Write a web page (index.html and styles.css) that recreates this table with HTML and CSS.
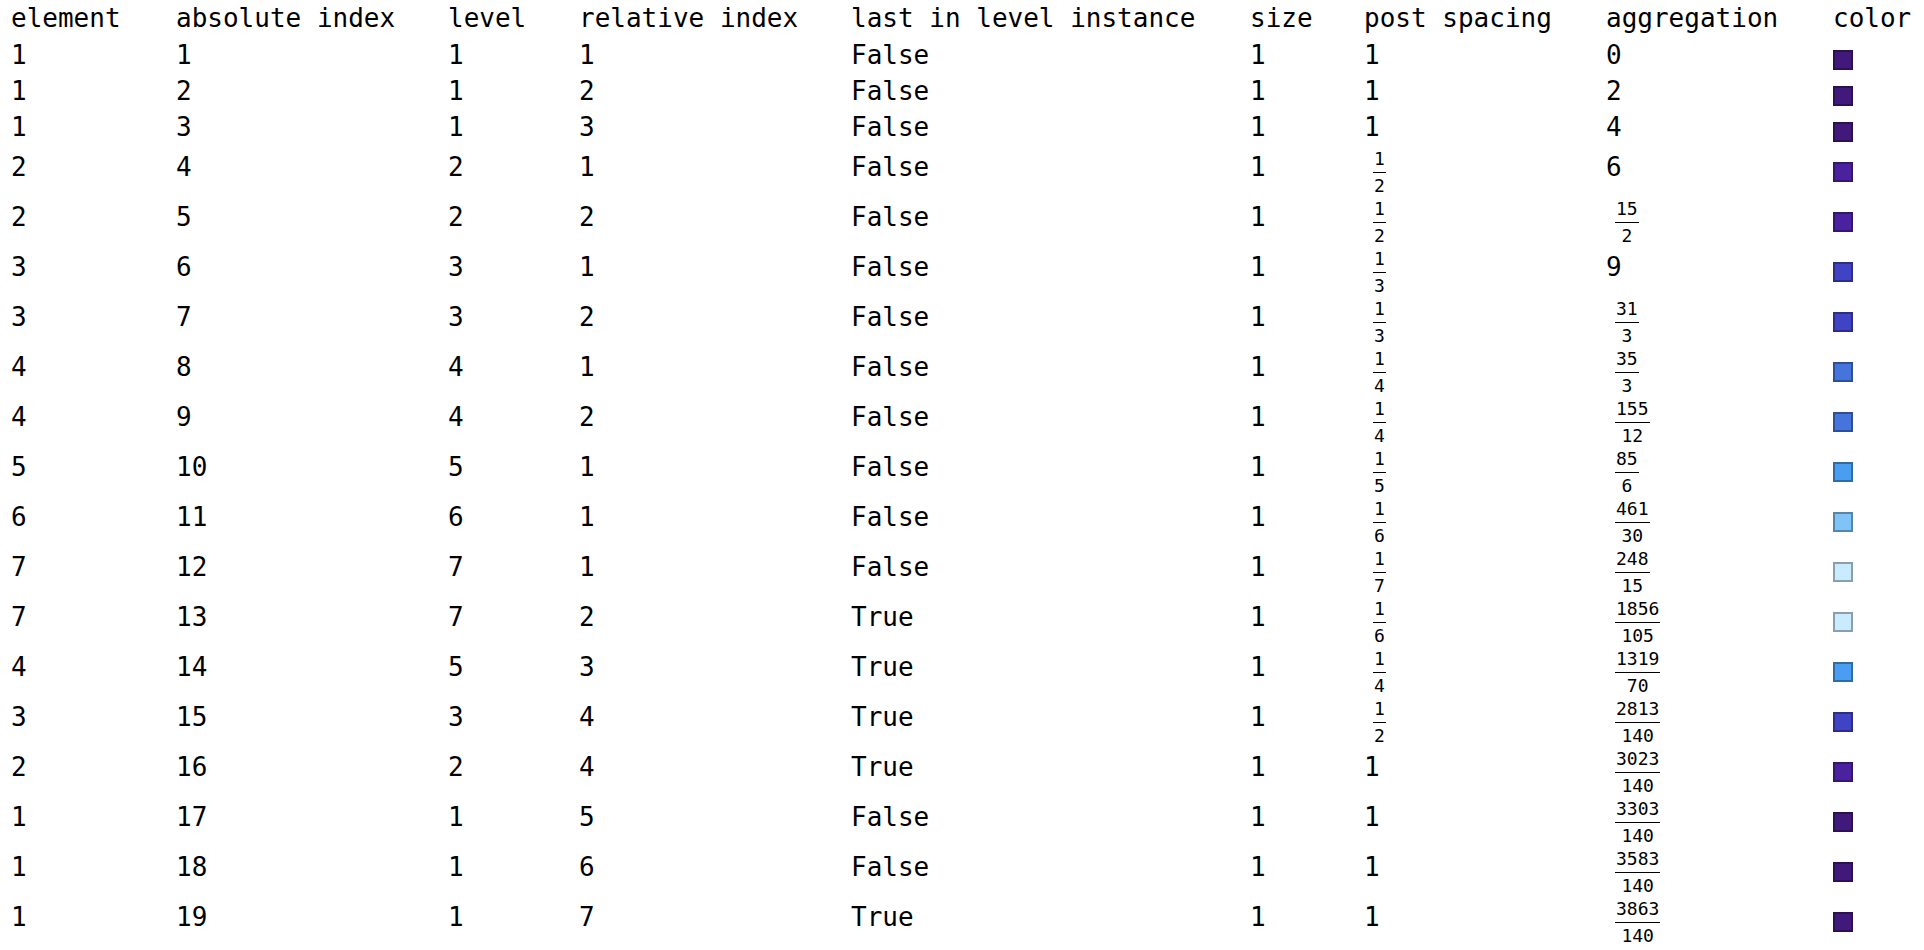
FILE: index.html
```html
<!DOCTYPE html>
<html>
<head>
<meta charset="utf-8">
<title>Levels</title>
<link rel="stylesheet" href="styles.css">
</head>
<body>
<table class="grid">
<colgroup>
<col class="c1"><col class="c2"><col class="c3"><col class="c4"><col class="c5"><col class="c6"><col class="c7"><col class="c8"><col class="c9">
</colgroup>
<thead>
<tr><th>element</th><th>absolute index</th><th>level</th><th>relative index</th><th>last in level instance</th><th>size</th><th>post spacing</th><th>aggregation</th><th>color</th></tr>
</thead>
<tbody>
<tr><td>1</td><td>1</td><td>1</td><td>1</td><td>False</td><td>1</td><td>1</td><td>0</td><td><span class="swatch lv1"></span></td></tr>
<tr><td>1</td><td>2</td><td>1</td><td>2</td><td>False</td><td>1</td><td>1</td><td>2</td><td><span class="swatch lv1"></span></td></tr>
<tr><td>1</td><td>3</td><td>1</td><td>3</td><td>False</td><td>1</td><td>1</td><td>4</td><td><span class="swatch lv1"></span></td></tr>
<tr><td>2</td><td>4</td><td>2</td><td>1</td><td>False</td><td>1</td><td><span class="frac"><span class="num">1</span><span class="bar"></span><span class="den">2</span></span></td><td>6</td><td><span class="swatch lv2"></span></td></tr>
<tr><td>2</td><td>5</td><td>2</td><td>2</td><td>False</td><td>1</td><td><span class="frac"><span class="num">1</span><span class="bar"></span><span class="den">2</span></span></td><td><span class="frac"><span class="num">15</span><span class="bar"></span><span class="den">2</span></span></td><td><span class="swatch lv2"></span></td></tr>
<tr><td>3</td><td>6</td><td>3</td><td>1</td><td>False</td><td>1</td><td><span class="frac"><span class="num">1</span><span class="bar"></span><span class="den">3</span></span></td><td>9</td><td><span class="swatch lv3"></span></td></tr>
<tr><td>3</td><td>7</td><td>3</td><td>2</td><td>False</td><td>1</td><td><span class="frac"><span class="num">1</span><span class="bar"></span><span class="den">3</span></span></td><td><span class="frac"><span class="num">31</span><span class="bar"></span><span class="den">3</span></span></td><td><span class="swatch lv3"></span></td></tr>
<tr><td>4</td><td>8</td><td>4</td><td>1</td><td>False</td><td>1</td><td><span class="frac"><span class="num">1</span><span class="bar"></span><span class="den">4</span></span></td><td><span class="frac"><span class="num">35</span><span class="bar"></span><span class="den">3</span></span></td><td><span class="swatch lv4"></span></td></tr>
<tr><td>4</td><td>9</td><td>4</td><td>2</td><td>False</td><td>1</td><td><span class="frac"><span class="num">1</span><span class="bar"></span><span class="den">4</span></span></td><td><span class="frac"><span class="num">155</span><span class="bar"></span><span class="den">12</span></span></td><td><span class="swatch lv4"></span></td></tr>
<tr><td>5</td><td>10</td><td>5</td><td>1</td><td>False</td><td>1</td><td><span class="frac"><span class="num">1</span><span class="bar"></span><span class="den">5</span></span></td><td><span class="frac"><span class="num">85</span><span class="bar"></span><span class="den">6</span></span></td><td><span class="swatch lv5"></span></td></tr>
<tr><td>6</td><td>11</td><td>6</td><td>1</td><td>False</td><td>1</td><td><span class="frac"><span class="num">1</span><span class="bar"></span><span class="den">6</span></span></td><td><span class="frac"><span class="num">461</span><span class="bar"></span><span class="den">30</span></span></td><td><span class="swatch lv6"></span></td></tr>
<tr><td>7</td><td>12</td><td>7</td><td>1</td><td>False</td><td>1</td><td><span class="frac"><span class="num">1</span><span class="bar"></span><span class="den">7</span></span></td><td><span class="frac"><span class="num">248</span><span class="bar"></span><span class="den">15</span></span></td><td><span class="swatch lv7"></span></td></tr>
<tr><td>7</td><td>13</td><td>7</td><td>2</td><td>True</td><td>1</td><td><span class="frac"><span class="num">1</span><span class="bar"></span><span class="den">6</span></span></td><td><span class="frac"><span class="num">1856</span><span class="bar"></span><span class="den">105</span></span></td><td><span class="swatch lv7"></span></td></tr>
<tr><td>4</td><td>14</td><td>5</td><td>3</td><td>True</td><td>1</td><td><span class="frac"><span class="num">1</span><span class="bar"></span><span class="den">4</span></span></td><td><span class="frac"><span class="num">1319</span><span class="bar"></span><span class="den">70</span></span></td><td><span class="swatch lv5"></span></td></tr>
<tr><td>3</td><td>15</td><td>3</td><td>4</td><td>True</td><td>1</td><td><span class="frac"><span class="num">1</span><span class="bar"></span><span class="den">2</span></span></td><td><span class="frac"><span class="num">2813</span><span class="bar"></span><span class="den">140</span></span></td><td><span class="swatch lv3"></span></td></tr>
<tr><td>2</td><td>16</td><td>2</td><td>4</td><td>True</td><td>1</td><td>1</td><td><span class="frac"><span class="num">3023</span><span class="bar"></span><span class="den">140</span></span></td><td><span class="swatch lv2"></span></td></tr>
<tr><td>1</td><td>17</td><td>1</td><td>5</td><td>False</td><td>1</td><td>1</td><td><span class="frac"><span class="num">3303</span><span class="bar"></span><span class="den">140</span></span></td><td><span class="swatch lv1"></span></td></tr>
<tr><td>1</td><td>18</td><td>1</td><td>6</td><td>False</td><td>1</td><td>1</td><td><span class="frac"><span class="num">3583</span><span class="bar"></span><span class="den">140</span></span></td><td><span class="swatch lv1"></span></td></tr>
<tr><td>1</td><td>19</td><td>1</td><td>7</td><td>True</td><td>1</td><td>1</td><td><span class="frac"><span class="num">3863</span><span class="bar"></span><span class="den">140</span></span></td><td><span class="swatch lv1"></span></td></tr>
</tbody>
</table>
</body>
</html>
```

FILE: styles.css
```css
html, body {
  margin: 0;
  padding: 0;
  background: #ffffff;
}

body {
  font-family: "DejaVu Sans Mono", monospace;
  font-size: 26px;
  color: #000000;
}

.grid {
  border-collapse: collapse;
  border-spacing: 0;
  table-layout: fixed;
  width: 1902px;
  margin-left: 11px;
}

.c1 { width: 165px; }
.c2 { width: 272px; }
.c3 { width: 131px; }
.c4 { width: 272px; }
.c5 { width: 399px; }
.c6 { width: 114px; }
.c7 { width: 242px; }
.c8 { width: 227px; }
.c9 { width: 80px; }

.grid th,
.grid td {
  padding: 0;
  text-align: left;
  vertical-align: baseline;
  font-weight: normal;
  line-height: 36px;
  white-space: nowrap;
}

.grid thead th {
  padding-bottom: 1px;
}

.frac {
  display: inline-block;
  vertical-align: -15.7px;
  font-size: 18px;
  line-height: 16px;
  padding: 6px 1px 1px;
  margin-left: 9px;
  text-align: center;
}

.frac .num,
.frac .den {
  display: block;
}

.frac .bar {
  display: block;
  height: 1px;
  background: #000000;
  margin: 5px -1px 5px;
}

.swatch {
  display: inline-block;
  box-sizing: border-box;
  width: 20px;
  height: 20px;
  border: 2px solid;
  vertical-align: -6px;
  margin-left: 0;
}

.lv1 { background: #40197a; border-color: #2b1153; }
.lv2 { background: #4a22a0; border-color: #32176d; }
.lv3 { background: #4044c4; border-color: #2b2e85; }
.lv4 { background: #4474dc; border-color: #2e4f96; }
.lv5 { background: #4a9df0; border-color: #326ba3; }
.lv6 { background: #80c4f7; border-color: #5785a8; }
.lv7 { background: #c9ebfd; border-color: #89a0ac; }
```
